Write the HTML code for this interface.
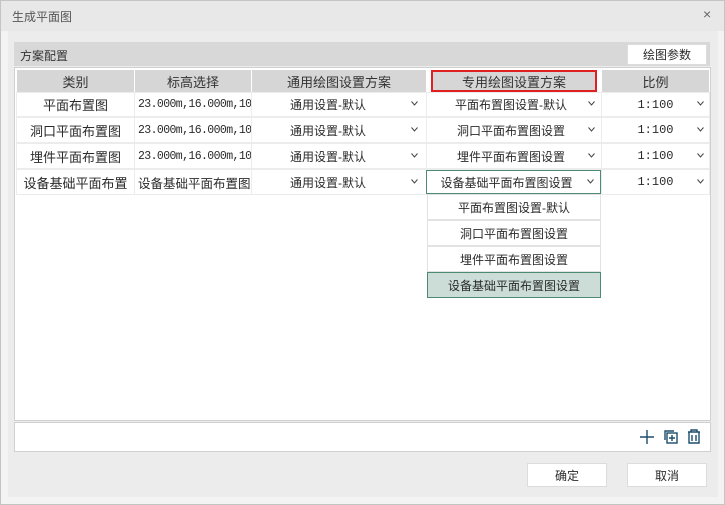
<!DOCTYPE html><html><head><meta charset="utf-8"><style>
*{box-sizing:border-box;margin:0;padding:0}
body{width:725px;height:505px;overflow:hidden;background:#f3f3f3;font-family:"Liberation Sans","Noto Sans CJK SC",sans-serif;font-size:12px;color:#2a2a2a;position:relative}
.a{position:absolute}
.win{left:0;top:0;width:725px;height:505px;border:1px solid #c4c4c4}
.c{display:flex;align-items:center;justify-content:center;white-space:nowrap;overflow:hidden}
.h{background:#d6d6d6;font-size:13px;color:#333}
.cell{background:#fff}
.chev{position:absolute;width:7px;height:5px}
.btn{background:#fff;border:1px solid #dcdcdc}
.num{font-family:"Liberation Mono",monospace;font-size:11.5px;letter-spacing:-0.6px}
.nl{display:flex;align-items:center;padding-left:3px;overflow:hidden;white-space:nowrap}
</style></head><body>
<svg width="0" height="0" style="position:absolute"><defs><symbol id="cv" viewBox="0 0 7 5"><path d="M0.5 0.5L3.5 4L6.5 0.5" fill="none" stroke="#444" stroke-width="1"/></symbol></defs></svg>
<div class="a win"></div>
<div class="a" style="left:1px;top:1px;width:723px;height:30px;background:#e8e8e8"></div>
<div class="a" style="left:12px;top:8px;font-size:12px;color:#555">生成平面图</div>
<div class="a" style="left:703px;top:6px;font-size:14px;color:#666">×</div>
<div class="a" style="left:8px;top:31px;width:710px;height:466px;background:#ececec"></div>
<div class="a" style="left:14px;top:42px;width:696px;height:24px;background:#d8d8d8"></div>
<div class="a" style="left:20px;top:47px;font-size:12px;color:#333">方案配置</div>
<div class="a btn c" style="left:627px;top:44px;width:80px;height:21px">绘图参数</div>
<div class="a" style="left:14px;top:67px;width:697px;height:354px;background:#fff;border:1px solid #d0d0d0"></div>
<div class="a h c" style="left:17px;top:70px;width:117px;height:22px">类别</div>
<div class="a h c" style="left:135px;top:70px;width:116px;height:22px">标高选择</div>
<div class="a h c" style="left:252px;top:70px;width:174px;height:22px">通用绘图设置方案</div>
<div class="a h c" style="left:431px;top:70px;width:166px;height:22px;border:2px solid #e02020">专用绘图设置方案</div>
<div class="a h c" style="left:602px;top:70px;width:107px;height:22px">比例</div>
<div class="a" style="left:16px;top:92px;width:694px;height:103px;background:#ececec"></div>

<div class="a cell c" style="left:17px;top:93px;width:117px;height:23px;font-size:13px">平面布置图</div>
<div class="a cell c" style="left:17px;top:118px;width:117px;height:24px;font-size:13px">洞口平面布置图</div>
<div class="a cell c" style="left:17px;top:144px;width:117px;height:24px;font-size:13px">埋件平面布置图</div>
<div class="a cell c" style="left:17px;top:170px;width:117px;height:24px;font-size:13px">设备基础平面布置</div>
<div class="a cell num nl" style="left:135px;top:93px;width:116px;height:23px">23.000m,16.000m,10</div>
<div class="a cell num nl" style="left:135px;top:118px;width:116px;height:24px">23.000m,16.000m,10</div>
<div class="a cell num nl" style="left:135px;top:144px;width:116px;height:24px">23.000m,16.000m,10</div>
<div class="a cell nl" style="left:135px;top:170px;width:116px;height:24px;font-size:12.5px">设备基础平面布置图</div>
<div class="a cell c" style="left:252px;top:93px;width:174px;height:23px;padding-right:22px">通用设置-默认<svg class="chev" style="right:8px;top:8px"><use href="#cv"/></svg></div>
<div class="a cell c" style="left:252px;top:118px;width:174px;height:24px;padding-right:22px">通用设置-默认<svg class="chev" style="right:8px;top:9px"><use href="#cv"/></svg></div>
<div class="a cell c" style="left:252px;top:144px;width:174px;height:24px;padding-right:22px">通用设置-默认<svg class="chev" style="right:8px;top:9px"><use href="#cv"/></svg></div>
<div class="a cell c" style="left:252px;top:170px;width:174px;height:24px;padding-right:22px">通用设置-默认<svg class="chev" style="right:8px;top:9px"><use href="#cv"/></svg></div>
<div class="a cell c" style="left:427px;top:93px;width:174px;height:23px;padding-right:6px">平面布置图设置-默认<svg class="chev" style="right:6px;top:8px"><use href="#cv"/></svg></div>
<div class="a cell c" style="left:427px;top:118px;width:174px;height:24px;padding-right:6px">洞口平面布置图设置<svg class="chev" style="right:6px;top:9px"><use href="#cv"/></svg></div>
<div class="a cell c" style="left:427px;top:144px;width:174px;height:24px;padding-right:6px">埋件平面布置图设置<svg class="chev" style="right:6px;top:9px"><use href="#cv"/></svg></div>
<div class="a cell c" style="left:426px;top:170px;width:175px;height:24px;padding-right:14px;border:1px solid #4d8a72">设备基础平面布置图设置<svg class="chev" style="right:6px;top:8px"><use href="#cv"/></svg></div>
<div class="a cell c num" style="left:602px;top:93px;width:107px;height:23px;font-size:12px;letter-spacing:0">1:100<svg class="chev" style="right:5px;top:8px"><use href="#cv"/></svg></div>
<div class="a cell c num" style="left:602px;top:118px;width:107px;height:24px;font-size:12px;letter-spacing:0">1:100<svg class="chev" style="right:5px;top:9px"><use href="#cv"/></svg></div>
<div class="a cell c num" style="left:602px;top:144px;width:107px;height:24px;font-size:12px;letter-spacing:0">1:100<svg class="chev" style="right:5px;top:9px"><use href="#cv"/></svg></div>
<div class="a cell c num" style="left:602px;top:170px;width:107px;height:24px;font-size:12px;letter-spacing:0">1:100<svg class="chev" style="right:5px;top:9px"><use href="#cv"/></svg></div>
<div class="a" style="left:16px;top:195px;width:694px;height:225px;background:#fff"></div>
<div class="a" style="left:427px;top:194px;width:174px;height:104px;background:#e2e2e2"></div>
<div class="a cell c" style="left:428px;top:195px;width:172px;height:24px">平面布置图设置-默认</div>
<div class="a cell c" style="left:428px;top:221px;width:172px;height:24px">洞口平面布置图设置</div>
<div class="a cell c" style="left:428px;top:247px;width:172px;height:24px">埋件平面布置图设置</div>
<div class="a c" style="left:427px;top:272px;width:174px;height:26px;background:#cbddd6;border:1px solid #4d8a72">设备基础平面布置图设置</div>
<div class="a" style="left:14px;top:422px;width:697px;height:30px;background:#fff;border:1px solid #d0d0d0"></div>
<svg class="a" style="left:638px;top:427px" width="70" height="20" viewBox="0 0 70 20" fill="none" stroke="#1d4d6b" stroke-width="1.4">
<path d="M9 3v14M2 10h14"/>
<path d="M27 13V4h9"/><rect x="29" y="6" width="10" height="10"/><path d="M34 8v6M31 11h6"/>
<path d="M50 5h12M53 5V3h6v2M51 5v11h10V5M54 8v6M58 8v6"/>
</svg>
<div class="a btn c" style="left:527px;top:463px;width:80px;height:24px">确定</div>
<div class="a btn c" style="left:627px;top:463px;width:80px;height:24px">取消</div>
</body></html>
